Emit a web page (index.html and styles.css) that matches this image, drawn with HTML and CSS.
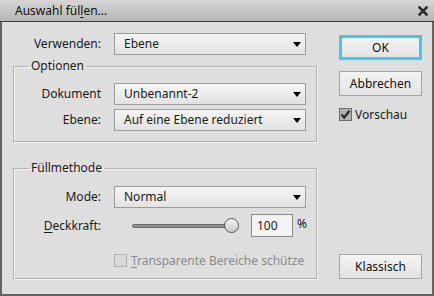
FILE: index.html
```html
<!DOCTYPE html>
<html lang="de">
<head>
  <meta charset="UTF-8">
  <title>Auswahl füllen</title>
  <link rel="stylesheet" href="styles.css">
</head>
<body>
  <div class="dialog">
    <div class="titlebar">
      <span class="title">Auswahl fül<u>l</u>en...</span>
      <svg class="close" width="10" height="10" viewBox="0 0 10 10">
        <path d="M1.5 1.5 L8.5 8.5 M8.5 1.5 L1.5 8.5" stroke="#2e2e2e" stroke-width="2.6" stroke-linecap="square"/>
      </svg>
    </div>
    <div class="content">
      <div class="main">
        <div class="row">
          <span class="lbl">Verwenden:</span>
          <div class="select">Ebene<i class="arrow"></i></div>
        </div>

        <fieldset class="group options">
          <legend>Optionen</legend>
          <div class="row">
            <span class="lbl">Dokument</span>
            <div class="select">Unbenannt-2<i class="arrow"></i></div>
          </div>
          <div class="row gap">
            <span class="lbl">Ebene:</span>
            <div class="select">Auf eine Ebene reduziert<i class="arrow"></i></div>
          </div>
        </fieldset>

        <fieldset class="group fill">
          <legend>Füllmethode</legend>
          <div class="row">
            <span class="lbl">Mode:</span>
            <div class="select">Normal<i class="arrow"></i></div>
          </div>
          <div class="row slider-row">
            <span class="lbl"><u>D</u>eckkraft:</span>
            <div class="slider">
              <div class="track"></div>
              <div class="thumb"></div>
            </div>
            <div class="num">100</div>
            <span class="pct">%</span>
          </div>
          <div class="row check-row">
            <span class="box disabled"></span>
            <span class="disabled-text"><u>T</u>ransparente Bereiche schütze</span>
          </div>
        </fieldset>
      </div>

      <div class="side">
        <button class="btn ok">OK</button>
        <button class="btn cancel">Abbrechen</button>
        <div class="preview">
          <svg class="box-checked" width="13" height="13" viewBox="0 0 13 13">
            <rect x="0.5" y="0.5" width="12" height="12" fill="#b2b2b2" stroke="#6a6a6a"/>
            <path d="M2.5 6.5 L5.2 9.5 L10.5 2.8" fill="none" stroke="#2a2a2a" stroke-width="2.2"/>
          </svg>
          <span>Vorschau</span>
        </div>
        <button class="btn classic">Klassisch</button>
      </div>
    </div>
  </div>
</body>
</html>
```

FILE: styles.css
```css
body { margin: 0; padding: 0; font-family: "Noto Sans", sans-serif; font-size: 12px; color: #1b1b1b; background: #dedede; }
u { text-decoration: underline; text-underline-offset: 2px; }

.dialog { width: 434px; height: 296px; box-sizing: border-box; background: #dedede; border: 2px solid #646464; border-top: 0; display: flex; flex-direction: column; }

.titlebar { height: 21px; margin: 0 -2px; border-bottom: 1px solid #3e3e3e; background: linear-gradient(#d7d7d7, #b6b6b6); display: flex; align-items: center; justify-content: space-between; padding: 0 6px 0 15px; }
.title { font-size: 12px; line-height: 14px; color: #111; }
.close { display: block; }

.content { display: flex; padding: 11px 0 0 11px; }
.main { width: 304px; }

.row { display: flex; align-items: center; height: 22px; }
.row.gap { margin-top: 4px; }
.lbl { width: 88px; text-align: right; margin-right: 13px; line-height: 14px; }
.group .lbl { width: 87px; }

.select { position: relative; width: 192px; height: 22px; box-sizing: border-box; border: 1px solid #9c9c9c; background: linear-gradient(#f5f5f5, #e2e2e2); padding-left: 9px; line-height: 20px; }
.arrow { position: absolute; right: 4px; top: 8px; width: 0; height: 0; border-left: 4.5px solid transparent; border-right: 4.5px solid transparent; border-top: 5px solid #000; }

.group { margin: 4px 0 0; padding: 0 0 10px; border: 1px solid #b3b3b3; box-shadow: inset 1px 1px 0 #f2f2f2, 1px 1px 0 #f2f2f2; }
.group legend { margin-left: 15px; padding: 0 2px; line-height: 14px; }
.group .row:first-of-type { margin-top: 10px; }
.fill { margin-top: 19px; padding-bottom: 8px; }
.fill .row:first-of-type { margin-top: 11px; }

.slider-row { margin-top: 5px; height: 25px; }
.slider { position: relative; width: 107px; height: 16px; margin-left: 18px; }
.track { position: absolute; left: 0; right: 6px; top: 6px; height: 4px; box-sizing: border-box; border: 1px solid #6a6a6a; border-radius: 2px; background: #929292; }
.thumb { position: absolute; right: 0; top: 0; width: 15px; height: 15px; box-sizing: border-box; border: 1px solid #555; border-radius: 50%; background: linear-gradient(#f2f2f2, #cdcdcd); }
.num { width: 42px; height: 23px; box-sizing: border-box; margin-left: 12px; border: 1px solid #8a8a8a; background: #f3f3f3; padding-left: 5px; line-height: 21px; }
.pct { margin-left: 4px; margin-top: -5px; }

.check-row { margin-top: 13px; height: 19px; }
.box { display: block; width: 13px; height: 13px; box-sizing: border-box; margin-left: 100px; margin-right: 4px; }
.box.disabled { border: 1px solid #b2b2b2; background: #d9d9d9; }
.disabled-text { color: #8b8b8b; }

.side { width: 83px; margin-left: 22px; display: flex; flex-direction: column; }
.btn { height: 25px; box-sizing: border-box; border: 1px solid #a5a5a5; background: linear-gradient(#f4f4f4, #e3e3e3); font-family: "Noto Sans", sans-serif; font-size: 12px; color: #111; padding: 0; }
.ok { margin-top: 2px; box-shadow: inset 0 0 0 2px #3fc6ef; }
.cancel { margin-top: 11px; }
.preview { display: flex; align-items: center; margin-top: 12px; height: 13px; }
.box-checked { display: block; margin-right: 3px; }
.classic { margin-top: auto; }
```
